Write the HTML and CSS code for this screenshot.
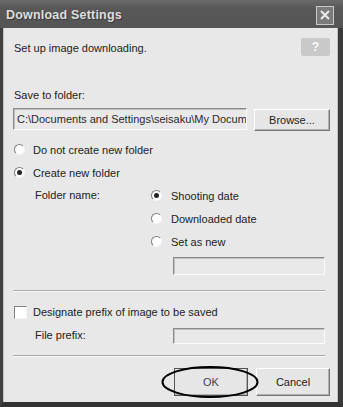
FILE: index.html
```html
<!DOCTYPE html>
<html>
<head>
<meta charset="utf-8">
<link rel="stylesheet" href="styles.css">
</head>
<body>
<div class="window">
  <div class="titlebar">
    <span class="title">Download Settings</span>
    <span class="close"><svg width="14" height="14" viewBox="0 0 14 14"><path d="M3 3 L11 11 M11 3 L3 11" stroke="#e8e8e8" stroke-width="2.2" fill="none"/></svg></span>
  </div>
  <div class="body">
    <div class="header">
      <span class="text">Set up image downloading.</span>
      <span class="help">?</span>
    </div>
    <div class="label save">Save to folder:</div>
    <div class="path-row">
      <div class="field path">C:\Documents and Settings\seisaku\My Docum</div>
      <div class="btn browse">Browse...</div>
    </div>
    <div class="opt"><span class="radio"></span>Do not create new folder</div>
    <div class="opt"><span class="radio on"></span>Create new folder</div>
    <div class="sub">
      <div class="sub-label">Folder name:</div>
      <div class="sub-opts">
        <div class="opt"><span class="radio on"></span>Shooting date</div>
        <div class="opt"><span class="radio"></span>Downloaded date</div>
        <div class="opt"><span class="radio"></span>Set as new</div>
        <div class="field box newname"></div>
      </div>
    </div>
    <div class="sep sep1"></div>
    <div class="opt check-row"><span class="check"></span>Designate prefix of image to be saved</div>
    <div class="prefix-row">
      <span class="sub-label">File prefix:</span>
      <div class="field box prefix"></div>
    </div>
    <div class="sep sep2"></div>
    <div class="buttons">
      <div class="btn ok">OK</div>
      <div class="btn cancel">Cancel</div>
      <svg class="ring" width="100" height="34" viewBox="0 0 100 34"><ellipse cx="50" cy="17" rx="47.5" ry="15" fill="none" stroke="#000" stroke-width="2"/></svg>
    </div>
  </div>
</div>
</body>
</html>
```

FILE: styles.css
```css
html, body {
  margin: 0;
  padding: 0;
  background: #e8e8e8;
}
.window {
  width: 343px;
  height: 407px;
  display: flex;
  flex-direction: column;
  font-family: "Liberation Sans", Arial, sans-serif;
  font-size: 11px;
  color: #222;
}
.titlebar {
  height: 28px;
  flex: none;
  background: linear-gradient(#6a6a6a, #585858 30%, #555 100%);
  display: flex;
  align-items: center;
  justify-content: space-between;
  padding: 0 9px 0 6px;
  box-sizing: border-box;
}
.title {
  color: #dedede;
  font-weight: bold;
  font-size: 12.5px;
  letter-spacing: 0.2px;
  text-shadow: 1px 1px 0 #3a3a3a;
  padding-top: 2px;
}
.close {
  width: 16px;
  height: 17px;
  border: 1px solid #c8c8c8;
  background: #7a7a7a;
  display: flex;
  align-items: center;
  justify-content: center;
  margin-top: 2px;
}
.body {
  flex: 1;
  background: #e8e8e8;
  border-left: 3px solid #404040;
  border-right: 5px solid #3a3a3a;
  border-bottom: 5px solid #333;
  box-shadow: inset 1px 0 0 #c4c4c4, inset -1px 0 0 #c4c4c4;
  padding: 0 8px 0 10px;
  display: flex;
  flex-direction: column;
}
.header {
  display: flex;
  justify-content: space-between;
  align-items: center;
  padding-top: 10px;
}
.header .text {
  margin-left: 1px;
  padding-top: 2px;
}
.help {
  width: 29px;
  height: 18px;
  background: #c9c9c9;
  border-radius: 2px;
  color: #fafafa;
  font-weight: bold;
  font-size: 12px;
  display: flex;
  align-items: center;
  justify-content: center;
}
.label.save {
  margin-top: 32px;
  height: 14px;
  line-height: 14px;
  margin-left: 1px;
}
.path-row {
  display: flex;
  gap: 7px;
  margin-top: 6px;
  height: 22px;
}
.field {
  box-sizing: border-box;
  background: #e9e9e9;
  border-top: 1px solid #8a8a8a;
  border-left: 1px solid #8a8a8a;
  border-bottom: 1px solid #fbfbfb;
  border-right: 1px solid #fbfbfb;
  box-shadow: inset 1px 1px 0 #c0c0c0;
}
.path {
  width: 234px;
  white-space: nowrap;
  overflow: hidden;
  line-height: 20px;
  padding-left: 3px;
  color: #2a2a2a;
}
.btn {
  box-sizing: border-box;
  background: #e6e6e6;
  border-top: 1px solid #fff;
  border-left: 1px solid #fff;
  border-right: 1px solid #777;
  border-bottom: 1px solid #777;
  box-shadow: inset -1px -1px 0 #b0b0b0;
  display: flex;
  align-items: center;
  justify-content: center;
}
.browse {
  width: 76px;
  height: 22px;
  margin-top: 1px;
}
.opt {
  display: flex;
  align-items: center;
  height: 23px;
}
.path-row + .opt {
  margin-top: 8px;
}
.radio {
  box-sizing: border-box;
  width: 11px;
  height: 11px;
  border-radius: 50%;
  background: #fff;
  border: 1px solid;
  border-color: #808080 #f4f4f4 #f4f4f4 #808080;
  margin: 0 8px 0 1px;
  position: relative;
  flex: none;
}
.radio.on::after {
  content: "";
  position: absolute;
  left: 2px;
  top: 2px;
  width: 5px;
  height: 5px;
  border-radius: 50%;
  background: #222;
}
.sub {
  display: grid;
  grid-template-columns: 115px 1fr;
  margin-left: 22px;
}
.sub-label {
  height: 23px;
  line-height: 23px;
}
.sub-opts .radio {
  margin-right: 9px;
}
.newname {
  width: 152px;
  height: 18px;
  margin: 4px 0 0 23px;
}
.sep {
  height: 1px;
  background: #a8a8a8;
  border-bottom: 1px solid #fafafa;
  margin-right: 5px;
}
.sep1 {
  margin-top: 15px;
}
.check-row {
  margin-top: 9px;
  height: 22px;
}
.check {
  box-sizing: border-box;
  width: 13px;
  height: 13px;
  background: #fff;
  border: 1px solid;
  border-color: #808080 #f4f4f4 #f4f4f4 #808080;
  margin: 0 6px 0 1px;
  flex: none;
}
.prefix-row {
  display: grid;
  grid-template-columns: 138px 152px;
  margin-left: 22px;
  margin-top: 1px;
  height: 22px;
  align-items: center;
}
.prefix {
  height: 16px;
}
.sep2 {
  margin-top: 9px;
}
.buttons {
  position: relative;
  display: flex;
  justify-content: flex-end;
  gap: 8px;
  margin-top: 11px;
}
.ok, .cancel {
  width: 74px;
  height: 28px;
}
.ok {
  border-right: 1px solid #333;
  border-bottom: 1px solid #333;
  outline: 1px solid #555;
  outline-offset: -1px;
  color: #444;
}
.ring {
  position: absolute;
  left: 147px;
  top: -3px;
}
```
